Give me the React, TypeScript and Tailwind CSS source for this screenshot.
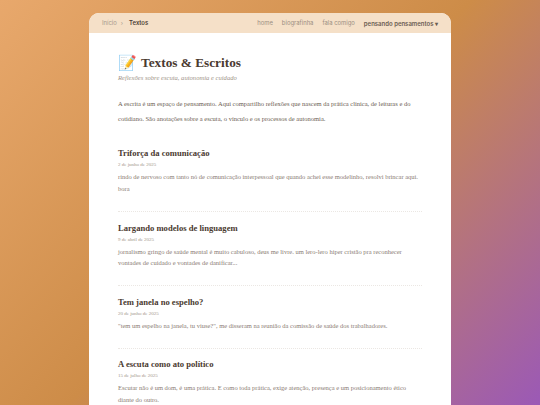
const posts = [
  {
    title: "Triforça da comunicação",
    date: "2 de junho de 2025",
    text: "rindo de nervoso com tanto nó de comunicação interpessoal que quando achei esse modelinho, resolvi brincar aqui. bora",
  },
  {
    title: "Largando modelos de linguagem",
    date: "9 de abril de 2025",
    text: "jornalismo gringo de saúde mental é muito cabuloso, deus me livre. um lero-lero hiper cristão pra reconhecer vontades de cuidado e vontades de danificar...",
  },
  {
    title: "Tem janela no espelho?",
    date: "20 de junho de 2025",
    text: "\"tem um espelho na janela, tu viuse?\", me disseram na reunião da comissão de saúde dos trabalhadores.",
  },
  {
    title: "A escuta como ato político",
    date: "15 de julho de 2025",
    text: "Escutar não é um dom, é uma prática. E como toda prática, exige atenção, presença e um posicionamento ético diante do outro.",
  },
];

export default function App() {
  return (
    <div className="h-[405px] w-[540px] overflow-hidden bg-[linear-gradient(135deg,#e8a86c_0%,#cd8c48_50%,#9b59b6_100%)] px-[89px] pt-[13px]">
      <div className="h-[392px] overflow-hidden rounded-t-[10px] bg-white">
        <nav className="flex h-[20px] items-center justify-between bg-[#f5e0c8] px-[13px] font-['Inter',sans-serif] text-[5.9px]">
          <div className="flex items-center gap-[4px]">
            <span className="text-[#a89a8c]">Início</span>
            <span className="text-[#a89a8c]">›</span>
            <span className="ml-[2px] font-semibold text-[#4a3a30]">Textos</span>
          </div>
          <div className="flex items-center gap-[9px] text-[#9a8e82]">
            <span>home</span>
            <span>biografinha</span>
            <span>fala comigo</span>
            <span className="text-[6px] font-semibold text-[#6b5d52]">pensando pensamentos ▾</span>
          </div>
        </nav>
        <main className="px-[29px] pt-[20px] font-['Liberation_Serif',serif]">
          <h1 className="flex items-center gap-[4px] text-[13.3px] leading-[20px] font-bold text-[#4a3a30]">
            <span className="text-[15px]">📝</span>
            Textos &amp; Escritos
          </h1>
          <p className="text-[6.6px] leading-[10px] text-[#a09488] italic">
            Reflexões sobre escuta, autonomia e cuidado
          </p>
          <p className="mt-[13px] text-[6.5px] leading-[15px] text-[#6b5d52]">
            A escrita é um espaço de pensamento. Aqui compartilho reflexões que nascem da prática clínica, de leituras e do cotidiano. São anotações sobre a escuta, o vínculo e os processos de autonomia.
          </p>
          <div className="mt-[20px]">
            {posts.map((p) => (
              <article key={p.title} className="border-b border-dotted border-[#ebe7e3] pt-[8.5px] pb-[16.5px] first:pt-0 first:pb-[17px] last:border-b-0">
                <h2 className="text-[8.6px] leading-[14px] font-bold text-[#4a3a30]">{p.title}</h2>
                <div className="text-[5px] leading-[9px] text-[#a09488]">{p.date}</div>
                <p className="mt-[2px] text-[6.5px] leading-[11.5px] text-[#8a7c74]">{p.text}</p>
              </article>
            ))}
          </div>
        </main>
      </div>
    </div>
  );
}
